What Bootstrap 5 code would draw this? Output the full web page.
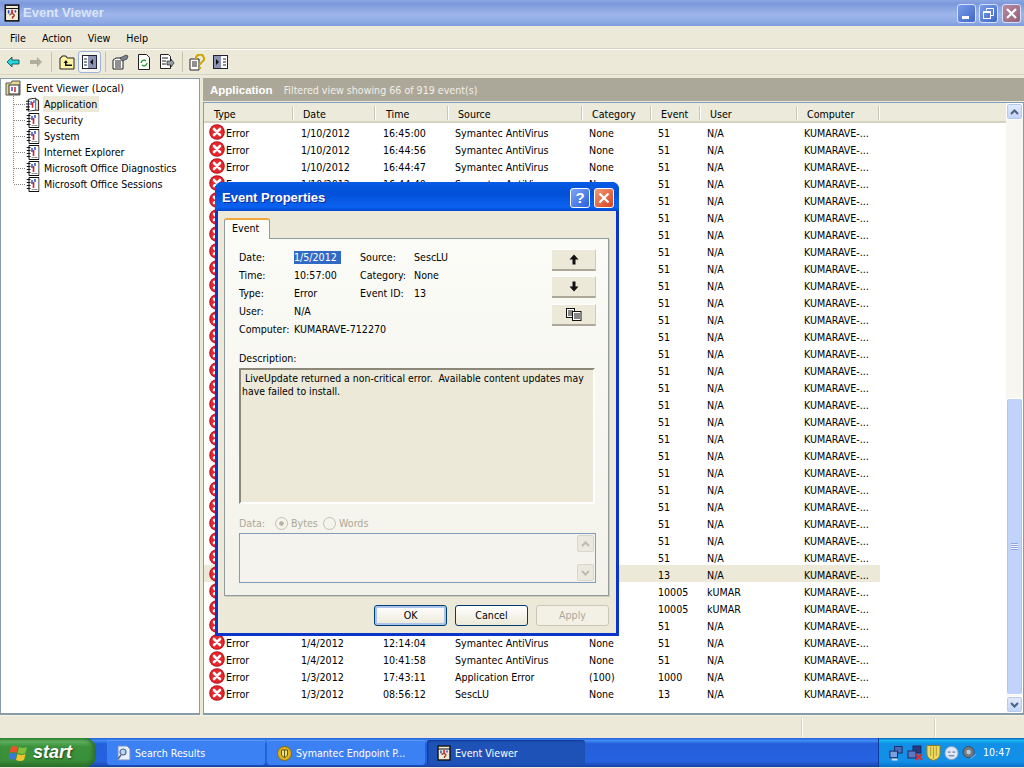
<!DOCTYPE html>
<html lang="en">
<head>
<meta charset="utf-8">
<title>Event Viewer</title>
<link href="https://cdn.jsdelivr.net/npm/bootstrap@5.3.0/dist/css/bootstrap.min.css" rel="stylesheet">
<style>
html,body{margin:0;width:1024px;height:768px;overflow:hidden;background:#ece9d8}
body,.xp-root{font-family:"DejaVu Sans Condensed","Liberation Sans",sans-serif;font-size:10.6px;line-height:13px;color:#000}
.xp-root{width:1024px;height:768px;overflow:hidden}
.title-bar{height:26px;flex:none;background:linear-gradient(180deg,#8aa6e2 0,#7c99dc 15%,#9db5ea 55%,#8eaae4 85%,#7f9cdc 100%);padding:0 3px 0 4px}
.title-txt{font:bold 13px/26px "Liberation Sans",sans-serif;color:#d9e4f8;margin-left:3px}
.win-ctl{width:19px;height:19px;border:1px solid #d8e2f6;border-radius:3px;background:linear-gradient(135deg,#7a9de8,#3f66c8);margin-left:3px}
.win-ctl.cl{background:linear-gradient(135deg,#b58a9c,#96607a);margin-left:4px}
.menu-row{height:23px;flex:none;padding-left:2px;border-bottom:1px solid #d8d4c2;box-shadow:0 1px 0 #fff}
.menu-it{padding:1px 8px 0;line-height:22px}
.tool-row{height:25px;flex:none;padding-left:1px;margin-top:1px;border-bottom:1px solid #d8d4c2}
.tool-btn{width:23px;height:22px}
.tool-btn.on{background:#f6f6f0;border:1px solid #9db1d8;border-radius:3px}
.tool-sep{width:8px;height:20px;background:linear-gradient(#c5c2b0,#c5c2b0) center/1px 100% no-repeat}
.main-row{height:640px;flex:none;padding-top:3px;gap:3px}
.tree-pane{width:200px;flex:none;background:#fff;border:1px solid #8a9ba8;border-bottom-width:2px;padding-top:1px}
.tree-root{height:16px;padding-left:4px;gap:4px}
.tree-kids{margin-left:12px;padding-left:13px;background:linear-gradient(#888 50%,transparent 50%) 0 0/1px 2px repeat-y;height:88px}
.tree-it{height:16px;gap:3px}
.tree-it::before{content:"";width:12px;height:1px;margin-left:-12px;margin-right:-3px;background:linear-gradient(90deg,#888 50%,transparent 50%) 0 0/2px 1px repeat-x}
.tree-lab{padding:1px 2px 0 1px;line-height:15px}
.tree-lab.sel{background:#ece9d8}
.right-pane{flex:1 1 0;min-width:0}
.pane-head{height:23px;flex:none;background:#aca899;color:#fff;padding:1px 0 0 7px;line-height:22px}
.pane-head b{font:bold 11.5px/22px "Liberation Sans",sans-serif;margin-right:11px}
.pane-head span{color:#f0efe8}
.list-box{flex:1 1 0;min-height:0;margin-top:1px;background:#fff;border:1px solid #7f9db9;border-bottom:2px solid #8a9ba8}
.list-main{width:802px;flex:none;overflow:hidden}
.evt-tbl{table-layout:fixed;width:802px;border-collapse:collapse;margin:0}
.evt-tbl th{height:20px;font-weight:400;padding:2px 0 0 9px;background:linear-gradient(#ebeadb,#ebeadb) 0 0/100% 18px no-repeat,linear-gradient(#d6d2c2,#d6d2c2);white-space:nowrap;position:relative}
.evt-tbl th:first-child,.evt-tbl th:nth-child(3){padding-left:10px}
.evt-tbl th:not(:last-child)::after{content:"";position:absolute;right:0;top:3px;height:14px;width:2px;background:linear-gradient(90deg,#cbc7b8 50%,#fff 50%)}
.evt-tbl td{height:17px;padding:3px 0 0 6px;white-space:nowrap;overflow:hidden;vertical-align:middle}
.evt-tbl td:nth-child(2),.evt-tbl td:nth-child(3){padding-left:7px}
.evt-tbl td:first-child{padding:0 0 0 5px}
.evt-tbl tr.hl td:not(:last-child){background:#ece9d8}
.cell-err{gap:1px;height:17px}
.cell-err span{padding-top:3px}
.sb-v{width:17px;flex:none;background:#f7f6f0}
.sb-btn{height:17px;width:17px;flex:none;background:linear-gradient(#e3ecfd,#c2d3f8);border:1px solid #fff;border-radius:3px;box-shadow:inset 0 0 0 1px #b5c8ee}
.sb-gap{height:277px;flex:none}
.sb-thumb{flex:1 1 0;background:#c2d3fb;border:1px solid #fff;border-radius:3px;box-shadow:inset 1px 0 0 #aec4f2,inset -1px 0 0 #aec4f2;margin:1px 0}
.grip{width:7px;height:7px;margin-top:144px;background:repeating-linear-gradient(#8ea6de 0,#8ea6de 1px,#eef3ff 1px,#eef3ff 2px)}
.stat-row{height:23px;flex:none;border-top:1px solid #f6f4ea}
.stat-cell{width:1px;height:19px;background:#fff;box-shadow:-1px 0 0 #d8d4c2}
.stat-a{width:802px;flex:none}
.stat-b{width:132px;flex:none}
.task-bar{height:29px;flex:none;background:linear-gradient(#245edb 0,#3f8cf3 9%,#245edb 20%,#2663e0 80%,#1941a5 100%)}
.start-btn{width:96px;height:29px;border-radius:0 11px 11px 0;background:linear-gradient(#388e38 0,#5fae5f 12%,#3c923c 30%,#3a8f3a 75%,#2b6f2b 100%);box-shadow:inset -3px 0 4px #2a6e2a;padding-left:9px;gap:4px;margin-right:11px;flex:none}
.start-txt{font:italic bold 18px/29px "Liberation Sans",sans-serif;color:#fff;text-shadow:1px 1px 2px #1c4a1c}
.task-it{width:158px;height:25px;margin-top:2px;margin-right:2px;border-radius:3px;background:#3c81f3;color:#fff;padding:1px 0 0 10px;gap:4px;box-shadow:inset 0 1px 0 #5a9af8;flex:none;white-space:nowrap}
.task-it.act{background:#1e52b7;box-shadow:inset 1px 1px 2px #103a8c}
.tray-box{width:146px;height:29px;background:linear-gradient(#0c59b9 0,#18b8f0 8%,#1290e8 20%,#1290e8 80%,#0b6fc8 100%);border-left:1px solid #0c3c9a;color:#fff;padding-left:10px;gap:3px}
.tray-time{margin-left:3px}
.dlg-box{position:absolute;left:215px;top:182px;width:404px;height:454px;background:#0a35c8;border-radius:7px 7px 0 0;padding:0 3px 3px}
.dlg-title{height:29px;flex:none;background:linear-gradient(#0a5ae8,#0558e0 10%,#0450d8 40%,#0a62f0 85%,#0448cf);margin:0 -3px;border-radius:7px 7px 0 0;padding:2px 5px 0 7px}
.dlg-title span{font:bold 13px/27px "Liberation Sans",sans-serif;color:#fff;text-shadow:1px 1px 0 #0a2a9a}
.cap-btn{width:20px;height:20px;border:1px solid #fff;border-radius:3px;background:linear-gradient(135deg,#7fa6f4,#2a5fdc);color:#fff;font:bold 15px/18px "Liberation Sans",sans-serif;text-align:center;margin-left:4px}
.cap-btn.cl{background:linear-gradient(135deg,#ef9a7a,#d8431e)}
.dlg-body{flex:1 1 0;background:#ece9d8;padding:7px 7px 7px 6px;min-height:0}
.tab-on{width:46px;height:22px;background:#fbfbf7;border:1px solid #919b9c;border-bottom:0;border-top:2px solid #f1a73a;border-radius:3px 3px 0 0;margin-bottom:-1px;padding-left:7px;line-height:17px;position:relative;z-index:1}
.tab-pane-x{height:358px;flex:none;border:1px solid #919b9c;background:linear-gradient(#fbfbf7,#f3f2ea);padding:9px 12px 0 14px;box-shadow:1px 1px 0 #d0cdbc}
.fld-grid{display:grid;grid-template-columns:55px 66px 54px 1fr;grid-auto-rows:18px;align-items:center;width:240px;height:90px}
.sel-txt{background:#316ac5;color:#fff;width:47px}
.nav-col{gap:5px;margin-top:1px;margin-left:auto}
.nav-btn{width:44px;height:22px;background:#ece9d8;border:0;border-bottom:2px solid #aca899;border-right:1px solid #cfcbb9;border-top:1px solid #fff;padding:0}
.nav-btn.copy-b{margin-top:1px}
.desc-lab{margin-top:14px;margin-bottom:3px}
.desc-txt{height:136px;background:#ece9d8;border:2px solid;border-color:#8b887a #fff #fff #8b887a;padding:2px 0 0 1px;white-space:pre;text-indent:3px;width:356px;font-size:10.4px}
.desc-txt .ln2{text-indent:0;display:block}
.data-row{height:18px;margin-top:10px;color:#aca899;gap:3px}
.lab-d{width:33px}.lab-b{width:29px}
.rad-off{width:13px;height:13px;border:1px solid #c4c1b0;border-radius:50%;background:#f4f3ec;flex:none}
.rad-off.dot{background:radial-gradient(circle,#b8b5a4 0 2px,#f4f3ec 2.5px)}
.data-box{height:50px;width:357px;margin-top:1px;border:1px solid #7f9db9;background:#f4f3ee;padding:1px 1px 1px 0}
.mini-sb{width:17px;margin-left:auto}
.mini-btn{height:17px;background:#ebe9df;border:1px solid #d8d6c8;border-radius:2px}
.dlg-acts{margin-top:9px;gap:8px}
.xp-btn{width:73px;height:21px;padding:0;font:inherit;line-height:17px;color:#000;background:linear-gradient(#fff,#ece9d8);border:1px solid #003c74;border-radius:3px}
.xp-btn.def{box-shadow:inset 0 0 0 2px #aac4ec}
.xp-btn:disabled{color:#aca899;border-color:#c9c7ba;background:#f3f1e6;opacity:1}
</style>
</head>
<body>
<svg width="0" height="0" class="position-absolute">
<defs>
<symbol id="err" viewBox="0 0 16 16"><circle cx="8" cy="8" r="7.8" fill="#b8141c"/><circle cx="8" cy="8" r="6.8" fill="#e8262e"/><path d="M5 5l6 6M11 5l-6 6" stroke="#fff" stroke-width="2.6" stroke-linecap="round"/></symbol>
<symbol id="logf" viewBox="0 0 13 15"><path d="M2.500.5h10v14h-10z" fill="#fff" stroke="#111"/><path d="M0 2.500h4M0 5.500h4M0 8.500h4M0 11.500h4" stroke="#111" stroke-width="1.200"/><path d="M5.500 3v4M8.500 2v3" stroke="#2a3fc0" stroke-width="1.400"/><path d="M7 5v6" stroke="#d02030" stroke-width="1.600"/><path d="M5 12.500h6" stroke="#999"/></symbol>
<symbol id="logo" viewBox="0 0 15 15"><path d="M2.500 2l8-1.500v13l-8 1.500z" fill="#fff" stroke="#111"/><path d="M10.500 2l3 1v11l-3-.500" fill="#e4e0d0" stroke="#111"/><path d="M0 4h4M0 7h4M0 10h4M0 13h4" stroke="#111" stroke-width="1.200"/><path d="M5.500 4v4M8.500 3v3" stroke="#2a3fc0" stroke-width="1.400"/><path d="M7 5v6" stroke="#d02030" stroke-width="1.600"/></symbol>
<symbol id="appi" viewBox="0 0 14 16"><rect x="1" y="1" width="12" height="14" fill="#f0ecd8" stroke="#111" stroke-width="1.400"/><path d="M1 4h12" stroke="#111"/><path d="M4 5.500v3M10 5.500v2" stroke="#2a3fc0" stroke-width="1.400"/><path d="M7 5v3" stroke="#d02030" stroke-width="1.600"/><path d="M5 10a2 1.500 0 1 1 2.500 1.500V13" fill="none" stroke="#a03020" stroke-width="1.200"/></symbol>
</defs>
</svg>
<div class="xp-root d-flex flex-column position-relative">
  <div class="title-bar d-flex align-items-center">
    <svg width="16" height="18" viewBox="0 0 14 16"><use href="#appi"/></svg>
    <span class="title-txt">Event Viewer</span>
    <div class="ms-auto d-flex align-items-center">
      <div class="win-ctl d-flex align-items-center justify-content-center"><svg width="13" height="13" viewBox="0 0 13 13"><rect x="2" y="9" width="7" height="3" fill="#fff"/></svg></div>
      <div class="win-ctl d-flex align-items-center justify-content-center"><svg width="13" height="13" viewBox="0 0 13 13" fill="none" stroke="#fff"><rect x="1.500" y="4.500" width="7" height="7"/><path d="M1.500 5.500h7"/><path d="M4.500 3.500v-2h7v7h-2.500"/></svg></div>
      <div class="win-ctl cl d-flex align-items-center justify-content-center"><svg width="13" height="13" viewBox="0 0 13 13"><path d="M2 2l9 9M11 2l-9 9" stroke="#fff" stroke-width="2.200"/></svg></div>
    </div>
  </div>
  <div class="menu-row d-flex align-items-center"><span class="menu-it">File</span><span class="menu-it">Action</span><span class="menu-it">View</span><span class="menu-it">Help</span></div>
  <div class="tool-row d-flex align-items-center">
    <div class="tool-btn d-flex align-items-center justify-content-center"><svg width="14" height="12" viewBox="0 0 14 12"><path d="M1 6l5-5v3h7v4H6v3z" fill="#27d6dc" stroke="#0f3d4a" stroke-width=".8"/></svg></div>
    <div class="tool-btn d-flex align-items-center justify-content-center"><svg width="14" height="12" viewBox="0 0 14 12"><path d="M13 6L8 1v3H1v4h7v3z" fill="#b0ae9f"/></svg></div>
    <div class="tool-sep"></div>
    <div class="tool-btn d-flex align-items-center justify-content-center"><svg width="16" height="15" viewBox="0 0 16 15"><path d="M1 3h1l1-2h4l1 2h7v11H1z" fill="#fdf4a4" stroke="#222"/><path d="M7 5L4.500 8H6v3h7v-1.500H7.500V8H9z" fill="#111"/></svg></div>
    <div class="tool-btn on d-flex align-items-center justify-content-center"><svg width="15" height="14" viewBox="0 0 15 14"><rect x=".5" y=".5" width="14" height="13" fill="#fff" stroke="#223"/><rect x="6" y="1" width="8" height="12" fill="#8b93b5"/><path d="M2 4h3M2 7h3M2 10h3" stroke="#223"/><path d="M11 4l-3 3 3 3z" fill="#111"/></svg></div>
    <div class="tool-sep"></div>
    <div class="tool-btn d-flex align-items-center justify-content-center"><svg width="17" height="16" viewBox="0 0 17 16"><path d="M1 6l3-2h7v11H1z" fill="#fff" stroke="#222"/><path d="M3 7h6M3 9h6M3 11h6M3 13h6" stroke="#222"/><path d="M8 4l6-3 2 1-1 3-5 2z" fill="#7c8290" stroke="#333" stroke-width=".7"/></svg></div>
    <div class="tool-btn d-flex align-items-center justify-content-center"><svg width="14" height="16" viewBox="0 0 14 16"><path d="M1.500.5h8l3 3v12h-11z" fill="#fff" stroke="#222"/><path d="M4 9a3 3 0 0 1 5-2M10 9a3 3 0 0 1-5 2" fill="none" stroke="#1a9a2a" stroke-width="1.300"/></svg></div>
    <div class="tool-btn d-flex align-items-center justify-content-center"><svg width="16" height="16" viewBox="0 0 16 16"><path d="M1.500.5h8l2 2v12h-10z" fill="#fff" stroke="#222"/><path d="M3 4h6M3 7h4M3 10h4" stroke="#222"/><path d="M8 7h4V5l3 4-3 4v-2H8z" fill="#9aa0a8" stroke="#222" stroke-width=".7"/></svg></div>
    <div class="tool-sep"></div>
    <div class="tool-btn d-flex align-items-center justify-content-center"><svg width="17" height="17" viewBox="0 0 17 17"><path d="M1 5h9v11H1z" fill="#fff" stroke="#222"/><path d="M3 8h5M3 10h5M3 12h5" stroke="#222"/><path d="M7 5a4 4 0 1 1 6 3l-2 2v1" fill="none" stroke="#c9a800" stroke-width="2"/><circle cx="11" cy="14" r="1.200" fill="#c9a800"/></svg></div>
    <div class="tool-btn d-flex align-items-center justify-content-center"><svg width="15" height="14" viewBox="0 0 15 14"><rect x=".5" y=".5" width="14" height="13" fill="#fff" stroke="#223"/><rect x="1" y="1" width="7" height="12" fill="#8b93b5"/><path d="M10 4h3M10 7h3M10 10h3" stroke="#223"/><path d="M3 4l3 3-3 3z" fill="#111"/></svg></div>
  </div>
  <div class="main-row d-flex">
    <div class="tree-pane">
      <div class="tree-root d-flex align-items-center">
        <svg width="17" height="16" viewBox="0 0 17 16"><path d="M1 3h5l1-2h8v14H1z" fill="#e8d890" stroke="#555"/><rect x="4" y="5" width="10" height="9" fill="#fff" stroke="#333"/><path d="M7 7v4" stroke="#2a3fc0" stroke-width="1.400"/><path d="M10 7v5" stroke="#d02030" stroke-width="1.500"/></svg>
        <span>Event Viewer (Local)</span>
      </div>
      <div class="tree-kids">
        <div class="tree-it d-flex align-items-center"><svg width="14" height="15" viewBox="0 0 15 15"><use href="#logo"/></svg><span class="tree-lab sel">Application</span></div>
        <div class="tree-it d-flex align-items-center"><svg width="14" height="15" viewBox="0 0 13 15"><use href="#logf"/></svg><span class="tree-lab">Security</span></div>
        <div class="tree-it d-flex align-items-center"><svg width="14" height="15" viewBox="0 0 13 15"><use href="#logf"/></svg><span class="tree-lab">System</span></div>
        <div class="tree-it d-flex align-items-center"><svg width="14" height="15" viewBox="0 0 13 15"><use href="#logf"/></svg><span class="tree-lab">Internet Explorer</span></div>
        <div class="tree-it d-flex align-items-center"><svg width="14" height="15" viewBox="0 0 13 15"><use href="#logf"/></svg><span class="tree-lab">Microsoft Office Diagnostics</span></div>
        <div class="tree-it d-flex align-items-center"><svg width="14" height="15" viewBox="0 0 13 15"><use href="#logf"/></svg><span class="tree-lab">Microsoft Office Sessions</span></div>
      </div>
    </div>
    <div class="right-pane d-flex flex-column">
      <div class="pane-head"><b>Application</b><span>Filtered view showing 66 of 919 event(s)</span></div>
      <div class="list-box d-flex">
        <div class="list-main">
          <table class="evt-tbl">
            <colgroup><col style="width:90px"><col style="width:82px"><col style="width:73px"><col style="width:134px"><col style="width:69px"><col style="width:49px"><col style="width:97px"><col style="width:82px"><col></colgroup>
            <thead><tr><th>Type</th><th>Date</th><th>Time</th><th>Source</th><th>Category</th><th>Event</th><th>User</th><th>Computer</th><th></th></tr></thead>
            <tbody id="evt-rows"></tbody>
          </table>
        </div>
        <div class="sb-v d-flex flex-column">
          <div class="sb-btn d-flex align-items-center justify-content-center"><svg width="9" height="6" viewBox="0 0 9 6"><path d="M1 5l3.500-3.500L8 5" fill="none" stroke="#4d6185" stroke-width="2"/></svg></div>
          <div class="sb-gap"></div>
          <div class="sb-thumb d-flex justify-content-center"><div class="grip"></div></div>
          <div class="sb-btn d-flex align-items-center justify-content-center"><svg width="9" height="6" viewBox="0 0 9 6"><path d="M1 1l3.500 3.500L8 1" fill="none" stroke="#4d6185" stroke-width="2"/></svg></div>
        </div>
      </div>
    </div>
  </div>
  <div class="stat-row d-flex align-items-center"><div class="stat-a"></div><div class="stat-cell"></div><div class="stat-b"></div><div class="stat-cell"></div></div>
  <div class="task-bar d-flex">
    <div class="start-btn d-flex align-items-center">
      <svg width="20" height="19" viewBox="0 0 20 19"><path d="M2 4q4-2 7 0l-1.500 6q-3-2-7 0z" fill="#e8552a"/><path d="M10 4q4 2 8 0l-1.500 6q-4 2-8 0z" fill="#7fc23a"/><path d="M.5 11q4-2 7 0L6 17q-3-2-7 0z" fill="#3a78e0"/><path d="M8.500 11q4 2 8 0L15 17q-4 2-8 0z" fill="#f4c52a"/></svg>
      <span class="start-txt">start</span>
    </div>
    <div class="task-it d-flex align-items-center"><svg width="14" height="16" viewBox="0 0 14 16"><path d="M1 1h9l3 3v11H1z" fill="#e8f0fc" stroke="#7090c0"/><circle cx="6" cy="7" r="3" fill="#bcd4f4" stroke="#506a90" stroke-width="1.200"/><path d="M4 10l-3 4" stroke="#506a90" stroke-width="1.600"/></svg><span>Search Results</span></div>
    <div class="task-it d-flex align-items-center"><svg width="15" height="15" viewBox="0 0 15 15"><circle cx="7.500" cy="7.500" r="7" fill="#e0b020" stroke="#7a6a10"/><path d="M4.500 4h6v5l-3 3-3-3z" fill="#f4e480" stroke="#5a5a10"/><path d="M7.500 4v7" stroke="#5a5a10"/></svg><span>Symantec Endpoint P...</span></div>
    <div class="task-it act d-flex align-items-center"><svg width="14" height="16" viewBox="0 0 14 16"><use href="#appi"/></svg><span>Event Viewer</span></div>
    <div class="tray-box ms-auto d-flex align-items-center">
      <svg width="15" height="16" viewBox="0 0 16 16"><rect x="6" y="1" width="8" height="7" fill="#4a6ab8" stroke="#1a2a60"/><rect x="1" y="6" width="8" height="7" fill="#7aa0e0" stroke="#1a2a60"/><path d="M3 15h6" stroke="#d8e0f0" stroke-width="2"/></svg>
      <svg width="16" height="16" viewBox="0 0 16 16"><rect x="6" y="1" width="8" height="7" fill="#2a3a80" stroke="#1a2a60"/><rect x="1" y="6" width="8" height="7" fill="#5a78c8" stroke="#1a2a60"/><path d="M9 9l6 6M15 9l-6 6" stroke="#e02a2a" stroke-width="2"/></svg>
      <svg width="15" height="18" viewBox="0 0 16 18"><path d="M1 1h14v9q0 5-7 7-7-2-7-7z" fill="#f0d860" stroke="#8a7a20"/><path d="M5 2v10M8 2v13M11 2v10" stroke="#a89a30"/></svg>
      <svg width="15" height="16" viewBox="0 0 16 16"><circle cx="8" cy="8" r="7" fill="#dfe8f4" stroke="#8aa0c0"/><path d="M4 7h3M9 7h3M5 11h6" stroke="#506080"/></svg>
      <svg width="15" height="16" viewBox="0 0 16 16"><circle cx="7" cy="7" r="6" fill="#707880" stroke="#404850"/><circle cx="7" cy="7" r="2.500" fill="#c0c8d0"/><path d="M9 14l6-5" stroke="#60a0f0" stroke-width="1.400"/></svg>
      <span class="tray-time">10:47</span>
    </div>
  </div>

  <div class="dlg-box d-flex flex-column">
    <div class="dlg-title d-flex align-items-center">
      <span>Event Properties</span>
      <div class="cap-btn ms-auto">?</div>
      <div class="cap-btn cl d-flex align-items-center justify-content-center"><svg width="12" height="12" viewBox="0 0 12 12"><path d="M1.500 1.500l9 9M10.500 1.500l-9 9" stroke="#fff" stroke-width="2.200"/></svg></div>
    </div>
    <div class="dlg-body d-flex flex-column">
      <div class="tab-on">Event</div>
      <div class="tab-pane-x">
        <div class="d-flex align-items-start">
          <div class="fld-grid">
            <span>Date:</span><span class="sel-txt">1/5/2012</span><span>Source:</span><span>SescLU</span>
            <span>Time:</span><span>10:57:00</span><span>Category:</span><span>None</span>
            <span>Type:</span><span>Error</span><span>Event ID:</span><span>13</span>
            <span>User:</span><span>N/A</span><span></span><span></span>
            <span>Computer:</span><span class="text-nowrap">KUMARAVE-712270</span><span></span><span></span>
          </div>
          <div class="nav-col d-flex flex-column">
            <button type="button" class="nav-btn d-flex align-items-center justify-content-center"><svg width="10" height="11" viewBox="0 0 10 11"><path d="M5 .5L9.500 5.500H6.500V10.500h-3V5.500H.5z" fill="#111"/></svg></button>
            <button type="button" class="nav-btn d-flex align-items-center justify-content-center"><svg width="10" height="11" viewBox="0 0 10 11"><path d="M5 10.500L9.500 5.500H6.500V.5h-3v5H.5z" fill="#111"/></svg></button>
            <button type="button" class="nav-btn copy-b d-flex align-items-center justify-content-center"><svg width="16" height="13" viewBox="0 0 16 13" fill="#fff" stroke="#111"><rect x=".5" y=".5" width="8" height="9"/><path d="M2 3h5M2 5h5M2 7h5"/><rect x="6.500" y="3.500" width="8.500" height="9"/><path d="M8 6h6M8 8h6M8 10h6"/></svg></button>
          </div>
        </div>
        <div class="desc-lab">Description:</div>
        <div class="desc-txt">LiveUpdate returned a non-critical error.  Available content updates may<span class="ln2">have failed to install.</span></div>
        <div class="data-row d-flex align-items-center"><span class="lab-d">Data:</span><span class="rad-off dot"></span><span class="lab-b">Bytes</span><span class="rad-off"></span><span>Words</span></div>
        <div class="data-box d-flex">
          <div class="mini-sb d-flex flex-column justify-content-between">
            <div class="mini-btn d-flex align-items-center justify-content-center"><svg width="9" height="6" viewBox="0 0 9 6"><path d="M1 5l3.500-3.500L8 5" fill="none" stroke="#bdbbae" stroke-width="2"/></svg></div>
            <div class="mini-btn d-flex align-items-center justify-content-center"><svg width="9" height="6" viewBox="0 0 9 6"><path d="M1 1l3.500 3.500L8 1" fill="none" stroke="#bdbbae" stroke-width="2"/></svg></div>
          </div>
        </div>
      </div>
      <div class="dlg-acts d-flex justify-content-end">
        <button type="button" class="btn xp-btn def">OK</button>
        <button type="button" class="btn xp-btn">Cancel</button>
        <button type="button" class="btn xp-btn" disabled>Apply</button>
      </div>
    </div>
  </div>
</div>
<script src="https://cdn.jsdelivr.net/npm/bootstrap@5.3.0/dist/js/bootstrap.bundle.min.js"></script>
<script>
var S="Symantec AntiVirus";
var rows=[
["1/10/2012","16:45:00",S,"None"],["1/10/2012","16:44:56",S,"None"],["1/10/2012","16:44:47",S,"None"],["1/10/2012","16:44:40",S,"None"]];
for(var i=4;i<30;i++)rows.push(["","","",""]);
rows.push(["1/4/2012","12:14:04",S,"None"],["1/4/2012","10:41:58",S,"None"],["1/3/2012","17:43:11","Application Error","(100)"],["1/3/2012","08:56:12","SescLU","None"]);
var html="";
rows.forEach(function(r,i){
  var ev="51",us="N/A";
  if(i==26)ev="13";
  if(i==27||i==28){ev="10005";us="kUMAR";}
  if(i==32)ev="1000";
  if(i==33)ev="13";
  html+='<tr'+(i==26?' class="hl"':'')+'><td><div class="cell-err d-flex align-items-center"><svg width="16" height="16" class="flex-shrink-0"><use href="#err"/></svg><span>'+(r[0]?'Error':'')+'</span></div></td><td>'+r[0]+'</td><td>'+r[1]+'</td><td>'+r[2]+'</td><td>'+r[3]+'</td><td>'+ev+'</td><td>'+us+'</td><td>KUMARAVE-...</td><td></td></tr>';
});
document.getElementById("evt-rows").innerHTML=html;
</script>
</body>
</html>
